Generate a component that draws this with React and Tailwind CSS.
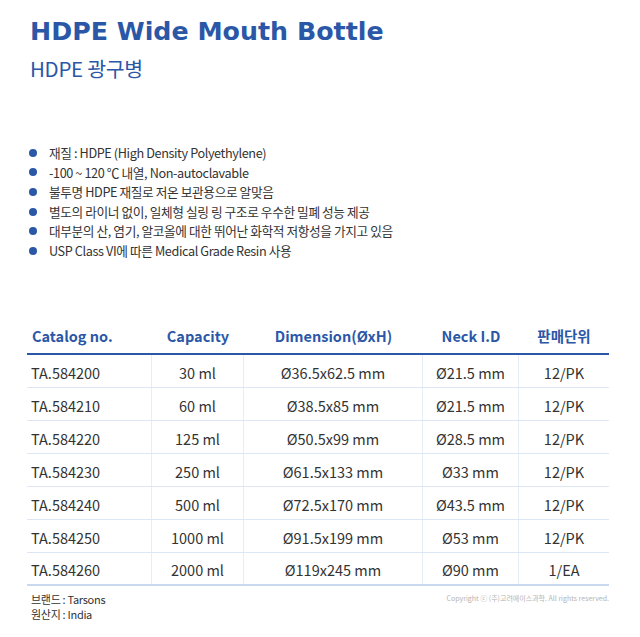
import React from "react";

const rows = [
  ["TA.584200", "30 ml", "Ø36.5x62.5 mm", "Ø21.5 mm", "12/PK"],
  ["TA.584210", "60 ml", "Ø38.5x85 mm", "Ø21.5 mm", "12/PK"],
  ["TA.584220", "125 ml", "Ø50.5x99 mm", "Ø28.5 mm", "12/PK"],
  ["TA.584230", "250 ml", "Ø61.5x133 mm", "Ø33 mm", "12/PK"],
  ["TA.584240", "500 ml", "Ø72.5x170 mm", "Ø43.5 mm", "12/PK"],
  ["TA.584250", "1000 ml", "Ø91.5x199 mm", "Ø53 mm", "12/PK"],
  ["TA.584260", "2000 ml", "Ø119x245 mm", "Ø90 mm", "1/EA"],
];

const bullets = [
  "재질 : HDPE (High Density Polyethylene)",
  "-100 ~ 120 ℃ 내열, Non-autoclavable",
  "불투명 HDPE 재질로 저온 보관용으로 알맞음",
  "별도의 라이너 없이, 일체형 실링 링 구조로 우수한 밀폐 성능 제공",
  "대부분의 산, 염기, 알코올에 대한 뛰어난 화학적 저항성을 가지고 있음",
  "USP Class VI에 따른 Medical Grade Resin 사용",
];

export default function App() {
  return (
    <div className="w-[640px] h-[637px] bg-white overflow-hidden font-['Noto_Sans_CJK_KR','Noto_Sans',sans-serif] text-[#333333]">
      <div className="pt-[17px] pl-[30px]">
        <h1 className="font-['DejaVu_Sans',sans-serif] font-bold text-[25.3px] leading-[30px] text-[#2b57a7]">
          HDPE Wide Mouth Bottle
        </h1>
        <h2 className="mt-[8px] text-[20.5px] leading-[26px] tracking-[-0.3px] text-[#2b57a7]">HDPE 광구병</h2>
      </div>

      <ul className="mt-[62px] pl-[29px]">
        {bullets.map((b) => (
          <li key={b} className="flex items-center h-[19.6px] text-[12.7px] leading-[19.6px] tracking-[-0.4px]">
            <span className="w-[8px] h-[8px] rounded-full bg-[#2b57a7] mr-[12px] shrink-0" />
            <span>{b}</span>
          </li>
        ))}
      </ul>

      <div className="mt-[58px] ml-[27px] w-[582px]">
        <div className="grid grid-cols-[125px_92px_179px_96px_90px] h-[36px] items-center font-bold text-[14.5px] text-[#2b57a7] border-b-2 border-[#2b57a7]">
          <div className="pl-[5px]">Catalog no.</div>
          <div className="text-center">Capacity</div>
          <div className="text-center">Dimension(ØxH)</div>
          <div className="text-center">Neck I.D</div>
          <div className="text-center">판매단위</div>
        </div>
        {rows.map((r, i) => (
          <div
            key={r[0]}
            className={
              "grid grid-cols-[125px_92px_179px_96px_90px] h-[33px] text-[14.5px] " +
              (i === rows.length - 1 ? "border-b-2 border-[#c9d8ef]" : "border-b border-[#dce6f4]")
            }
          >
            <div className="pl-[4px] pt-[4px] flex items-center border-r border-[#e6edf7]">{r[0]}</div>
            <div className="pt-[4px] flex items-center justify-center border-r border-[#e6edf7]">{r[1]}</div>
            <div className="pt-[4px] flex items-center justify-center border-r border-[#e6edf7]">{r[2]}</div>
            <div className="pt-[4px] flex items-center justify-center border-r border-[#e6edf7]">{r[3]}</div>
            <div className="pt-[4px] flex items-center justify-center">{r[4]}</div>
          </div>
        ))}
        <div className="flex justify-between mt-[6px]">
          <div className="pl-[4px] text-[11px] leading-[15.5px] tracking-[-0.3px]">
            <div>브랜드 : Tarsons</div>
            <div>원산지 : India</div>
          </div>
          <div className="text-[7px] leading-[12px] text-[#b4b4b4]">Copyright ⓒ (주)고려에이스과학. All rights reserved.</div>
        </div>
      </div>
    </div>
  );
}
